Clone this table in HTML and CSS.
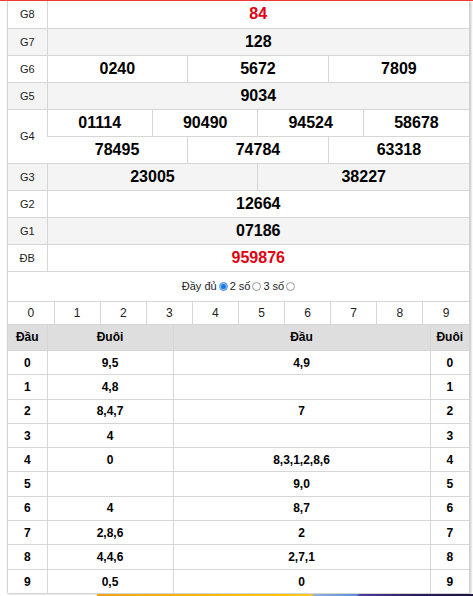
FILE: index.html
```html
<!DOCTYPE html>
<html lang="vi">
<head>
<meta charset="utf-8">
<title>Kết quả xổ số</title>
<link rel="stylesheet" href="styles.css">
</head>
<body>
<div class="topbar"></div>
<div class="box">
  <table class="kq">
    <colgroup><col class="c-lbl"><col span="12"></colgroup>
    <tr><td class="lbl">G8</td><td colspan="12" class="red">84</td></tr>
    <tr class="alt"><td class="lbl">G7</td><td colspan="12">128</td></tr>
    <tr><td class="lbl">G6</td><td colspan="4">0240</td><td colspan="4">5672</td><td colspan="4">7809</td></tr>
    <tr class="alt"><td class="lbl">G5</td><td colspan="12">9034</td></tr>
    <tr><td class="lbl" rowspan="2">G4</td><td colspan="3">01114</td><td colspan="3">90490</td><td colspan="3">94524</td><td colspan="3">58678</td></tr>
    <tr><td colspan="4">78495</td><td colspan="4">74784</td><td colspan="4">63318</td></tr>
    <tr class="alt"><td class="lbl">G3</td><td colspan="6">23005</td><td colspan="6">38227</td></tr>
    <tr><td class="lbl">G2</td><td colspan="12">12664</td></tr>
    <tr class="alt"><td class="lbl">G1</td><td colspan="12">07186</td></tr>
    <tr><td class="lbl">ĐB</td><td colspan="12" class="red">959876</td></tr>
  </table>

  <div class="opts">
    <span>Đầy đủ</span><span class="radio on"></span><span>2 số</span><span class="radio"></span><span>3 số</span><span class="radio"></span>
  </div>

  <table class="nums">
    <tr><td>0</td><td>1</td><td>2</td><td>3</td><td>4</td><td>5</td><td>6</td><td>7</td><td>8</td><td>9</td></tr>
  </table>

  <table class="lt">
    <colgroup><col class="c-a"><col class="c-b"><col><col class="c-a"></colgroup>
    <tr class="head"><th>Đầu</th><th>Đuôi</th><th>Đầu</th><th>Đuôi</th></tr>
    <tr><td>0</td><td>9,5</td><td>4,9</td><td>0</td></tr>
    <tr><td>1</td><td>4,8</td><td></td><td>1</td></tr>
    <tr><td>2</td><td>8,4,7</td><td>7</td><td>2</td></tr>
    <tr><td>3</td><td>4</td><td></td><td>3</td></tr>
    <tr><td>4</td><td>0</td><td>8,3,1,2,8,6</td><td>4</td></tr>
    <tr><td>5</td><td></td><td>9,0</td><td>5</td></tr>
    <tr><td>6</td><td>4</td><td>8,7</td><td>6</td></tr>
    <tr><td>7</td><td>2,8,6</td><td>2</td><td>7</td></tr>
    <tr><td>8</td><td>4,4,6</td><td>2,7,1</td><td>8</td></tr>
    <tr><td>9</td><td>0,5</td><td>0</td><td>9</td></tr>
  </table>
</div>
<div class="banner"></div>
</body>
</html>
```
FILE: styles.css
```css
html, body {
  margin: 0;
  padding: 0;
  background: #fff;
}
body {
  font-family: "Liberation Sans", Arial, sans-serif;
  color: #000;
  overflow: hidden;
}
.topbar {
  height: 1px;
  background: #f23a3a;
}
.box {
  margin-left: 7px;
  width: 461px;
  border-left: 1px solid #d3d3d3;
  border-right: 1px solid #d3d3d3;
  box-shadow: 1px 1px 2px rgba(0, 0, 0, 0.25);
}
table {
  width: 100%;
  border-collapse: collapse;
  table-layout: fixed;
}
td, th {
  border: 1px solid #d6d6d6;
  padding: 0;
  text-align: center;
  vertical-align: middle;
}
table tr > :first-child { border-left: hidden; }
table tr > :last-child { border-right: hidden; }

/* prize table */
.kq tr:first-child td { border-top: hidden; }
.kq .c-lbl { width: 39px; }
.kq tr { height: 27px; }
.kq td {
  font-size: 16px;
  font-weight: 700;
}
.kq td.lbl {
  font-size: 11px;
  font-weight: 400;
  color: #222;
  border-left: hidden;
}
.kq tr.alt td { background: #f4f4f4; }
.kq .red { color: #e3000f; }

/* options */
.opts {
  height: 29px;
  display: flex;
  align-items: center;
  justify-content: center;
  font-size: 11px;
  color: #222;
  padding-left: 2px;
}
.radio {
  display: inline-block;
  box-sizing: border-box;
  width: 9px;
  height: 9px;
  border-radius: 50%;
  border: 1px solid #9a9a9a;
  background: #fff;
  margin: 0 2px 0 2px;
}
.radio.on {
  border-color: #6aa8ec;
  background: #1f78e0;
  box-shadow: inset 0 0 0 1px #9cc6f2;
}

/* numbers row */
.nums tr:first-child td { border-top: 1px solid #d6d6d6; }
.nums tr { height: 23px; }
.nums td {
  font-size: 12px;
  color: #222;
}

/* loto table */
.lt tr:first-child > * { border-top: hidden; }
.lt tr:last-child > * { border-bottom: hidden; }
.lt .c-a { width: 39px; }
.lt .c-b { width: 126px; }
.lt tr.head { height: 26px; }
.lt th {
  background: #dedede;
  font-size: 12px;
  font-weight: 700;
}
.lt tr { height: 24.3px; }
.lt td {
  font-size: 12px;
  font-weight: 700;
}

.banner {
  margin: 1px 0 0 97px;
  height: 4px;
  background: linear-gradient(90deg, #f2a21c 0%, #ffc90a 50%, #f7c53a 57%, #8fb0d8 58%, #5b8ed8 69%, #4b3a9e 70%, #2a1d5c 85%, #1b1440 100%);
}
```
